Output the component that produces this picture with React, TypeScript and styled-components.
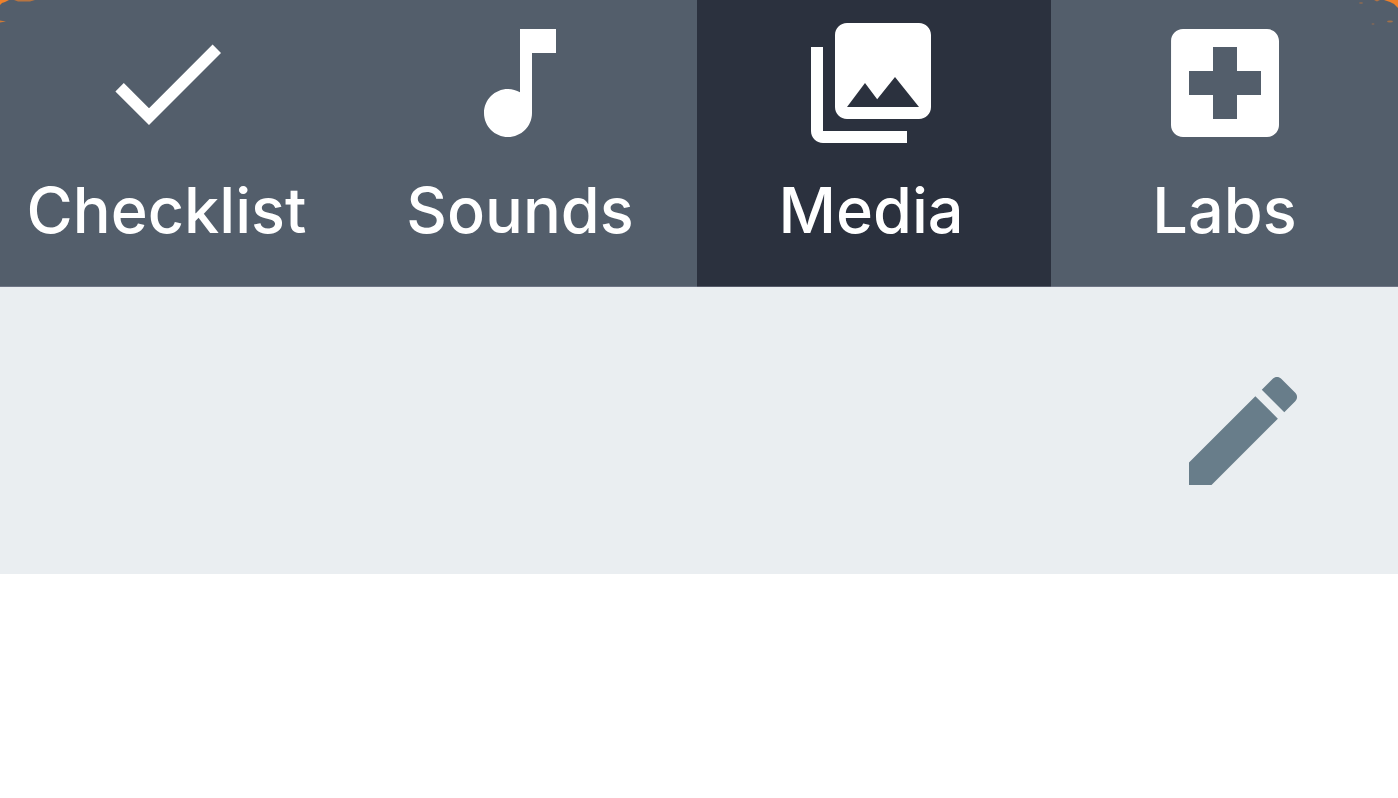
import React from "react";
import styled, { createGlobalStyle } from "styled-components";

const GlobalStyle = createGlobalStyle`
  * { box-sizing: border-box; }
  body { margin: 0; background: #ffffff; font-family: Inter, "Liberation Sans", sans-serif; }
`;

const Page = styled.div`
  position: relative;
  min-height: 100vh;
  background: #ffffff;
`;

const TabBar = styled.nav`
  display: grid;
  grid-template-columns: 343fr 354fr 354fr 347fr;
  background: #535e6b;
`;

const Tab = styled.button<{ $active?: boolean; $inset?: number }>`
  display: flex;
  flex-direction: column;
  align-items: center;
  min-width: 0;
  padding: 11px ${(p) => p.$inset ?? 0}px 38px 0;
  border: 0;
  border-bottom: 1px solid ${(p) => (p.$active ? "#555a69" : "#6f7686")};
  background: ${(p) => (p.$active ? "#2b313e" : "transparent")};
  color: #ffffff;
  font: inherit;
  cursor: pointer;
`;

const Label = styled.span`
  margin-top: 17px;
  font-size: 63px;
  font-weight: 450;
  line-height: 76px;
  white-space: nowrap;
`;

const Icon = styled.svg`
  display: block;
  width: 144px;
  height: 144px;
  fill: currentColor;
`;

const EditBar = styled.section`
  display: flex;
  align-items: center;
  justify-content: flex-end;
  height: 287px;
  padding-right: 83px;
  background: #eaeef1;
`;

const EditButton = styled.button`
  padding: 0;
  border: 0;
  background: none;
  color: #687d8a;
  cursor: pointer;
`;

const Corner = styled.svg<{ $side: "left" | "right" }>`
  position: absolute;
  top: 0;
  ${(p) => p.$side}: 0;
  width: 60px;
  height: 30px;
  fill: #ee812b;
  pointer-events: none;
`;

const tabs = [
  {
    label: "Checklist",
    inset: 10,
    path: "M9 16.2L4.8 12l-1.4 1.4L9 19 21 7l-1.4-1.4L9 16.2z",
  },
  {
    label: "Sounds",
    path: "M12 3v10.55c-.59-.34-1.27-.55-2-.55-2.21 0-4 1.79-4 4s1.79 4 4 4 4-1.79 4-4V7h4V3h-6z",
  },
  {
    label: "Media",
    inset: 6,
    active: true,
    path: "M22 16V4c0-1.1-.9-2-2-2H8c-1.1 0-2 .9-2 2v12c0 1.1.9 2 2 2h12c1.1 0 2-.9 2-2zm-11-4l2.03 2.71L16 11l4 5H8l3-4zM2 6v14c0 1.1.9 2 2 2h14v-2H4V6H2z",
  },
  {
    label: "Labs",
    path: "M19 3H5c-1.1 0-1.99.9-1.99 2L3 19c0 1.1.9 2 2 2h14c1.1 0 2-.9 2-2V5c0-1.1-.9-2-2-2zm-1 11h-4v4h-4v-4H6v-4h4V6h4v4h4v4z",
  },
];

export default function App() {
  return (
    <Page>
      <GlobalStyle />
      <TabBar>
        {tabs.map((tab) => (
          <Tab
            key={tab.label}
            type="button"
            $active={tab.active}
            $inset={tab.inset}
            aria-current={tab.active ? "page" : undefined}
          >
            <Icon viewBox="0 0 24 24" aria-hidden="true">
              <path d={tab.path} />
            </Icon>
            <Label>{tab.label}</Label>
          </Tab>
        ))}
      </TabBar>
      <EditBar>
        <EditButton type="button" aria-label="Edit">
          <Icon viewBox="0 0 24 24" aria-hidden="true">
            <path d="M3 17.25V21h3.75L17.81 9.94l-3.75-3.75L3 17.25zM20.71 7.04c.39-.39.39-1.02 0-1.41l-2.34-2.34c-.39-.39-1.02-.39-1.41 0l-1.83 1.83 3.75 3.75 1.83-1.83z" />
          </Icon>
        </EditButton>
      </EditBar>
      <Corner $side="left" viewBox="0 0 60 30" aria-hidden="true">
        <path d="M0 0H9L5 2 2 3 0 5z" />
        <path d="M14 0H35L30 1.500H18z" opacity=".65" />
        <path d="M0 20.500L6 21.500 0 22.500z" opacity=".8" />
      </Corner>
      <Corner $side="right" viewBox="0 0 60 30" aria-hidden="true">
        <path d="M46 0H60V8L56 4 52 2z" />
        <path d="M36 0H42L39 1.500z" opacity=".6" />
        <ellipse cx="23" cy="3" rx="2" ry="1" opacity=".3" />
        <ellipse cx="52" cy="21.500" rx="3" ry="1" opacity=".5" />
        <ellipse cx="35" cy="24" rx="1.500" ry="1" opacity=".25" />
      </Corner>
    </Page>
  );
}
